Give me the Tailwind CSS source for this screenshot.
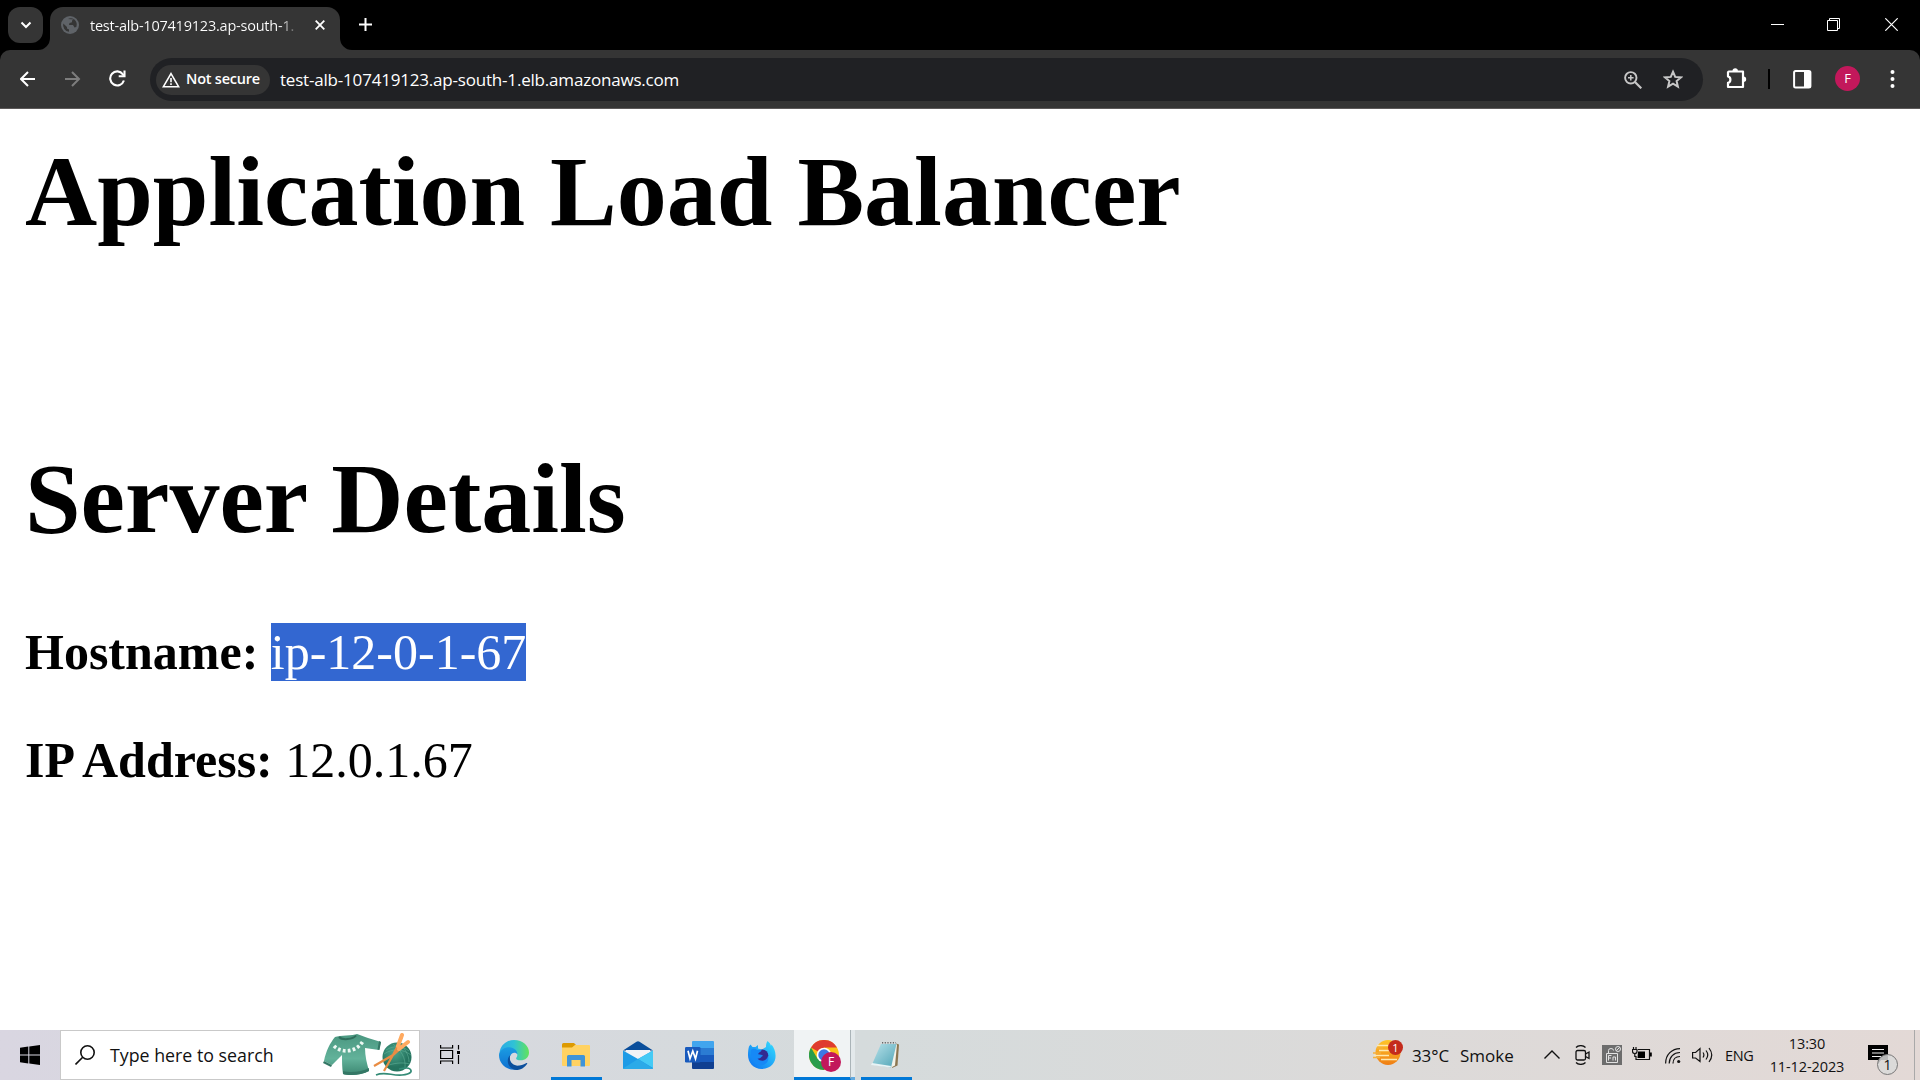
<!DOCTYPE html>
<html lang="en">
<head>
<meta charset="utf-8">
<title>test-alb-107419123.ap-south-1.elb.amazonaws.com</title>
<script src="https://cdn.jsdelivr.net/npm/@tailwindcss/browser@4"></script>
</head>
<body class="w-[1920px] h-[1080px] overflow-hidden flex flex-col bg-white font-['Open_Sans','Noto_Sans',sans-serif]">

<!-- Tab strip -->
<header class="h-[50px] shrink-0 bg-black flex text-white">
  <button class="ml-2 mt-[7px] w-[35px] h-9 rounded-xl bg-[#353535] flex items-center justify-center">
    <svg class="w-3 h-3" viewBox="0 0 12 12" fill="none" stroke="#fff" stroke-width="2"><path d="M1.500 3.500 6 8l4.500-4.500"/></svg>
  </button>
  <div class="mt-[7px] ml-[-5px] flex items-end">
    <svg class="w-3 h-3" viewBox="0 0 12 12"><path d="M12 0v12H0A12 12 0 0 0 12 0Z" fill="#353535"/></svg>
    <div class="w-[290px] h-[43px] rounded-t-[13px] bg-[#353535] flex items-start pt-[9px] pl-[11px]">
      <svg class="w-[18px] h-[18px] shrink-0" viewBox="0 0 18 18"><circle cx="9" cy="9" r="9" fill="#5f6368"/><path d="M2.200 7.500 6 11v1.500l2 1v2.300A7 7 0 0 1 2.200 7.500ZM7 3c1.500-1 4-1.300 6 .2L11 4.500v1.700L8.500 7 8 9h4l1.500 2.500 1.800-.5a7 7 0 0 0-1.800-7.400" fill="#353535"/></svg>
      <div class="ml-[11px] w-[209px] h-[22px] overflow-hidden whitespace-nowrap text-[14.500px] leading-[19px] tracking-[-0.22px] bg-linear-to-r from-white from-91% to-transparent bg-clip-text text-transparent">test-alb-107419123.ap-south-1.</div>
      <svg class="ml-4 mt-1 w-[10px] h-[10px]" viewBox="0 0 10 10" stroke="#fff" stroke-width="1.800"><path d="m.7.7 8.600 8.600M9.300.7.7 9.300"/></svg>
    </div>
    <svg class="w-3 h-3" viewBox="0 0 12 12"><path d="M0 0v12h12A12 12 0 0 1 0 0Z" fill="#353535"/></svg>
  </div>
  <svg class="ml-[7px] mt-[18px] w-[13px] h-[13px]" viewBox="0 0 13 13" stroke="#fff" stroke-width="2"><path d="M6.500 0v13M0 6.500h13"/></svg>
  <div class="ml-auto flex pt-[18px] pr-[22px]">
    <svg class="w-[13px] h-[13px]" viewBox="0 0 13 13" stroke="#fff"><path d="M0 6.500h13"/></svg>
    <svg class="ml-[43px] w-[13px] h-[13px]" viewBox="0 0 13 13" stroke="#fff" fill="none"><path d="M.5 2.500h10v10H.5zM2.500 2.500v-2h10v10h-2"/></svg>
    <svg class="ml-[45px] w-[13px] h-[13px]" viewBox="0 0 13 13" stroke="#fff" stroke-width="1.200"><path d="m.3.3 12.400 12.400M12.700.3.3 12.700"/></svg>
  </div>
</header>

<!-- Toolbar -->
<div class="h-[59px] shrink-0 bg-black">
<nav class="h-[59px] bg-[#353535] rounded-t-[10px] border-b border-[#5c5959] flex items-start text-white">
  <svg class="ml-5 mt-[21px] w-4 h-4" viewBox="0 0 16 16" fill="none" stroke="#fff" stroke-width="2"><path d="M15 8H1.500M8 1 1 8l7 7"/></svg>
  <svg class="ml-[29px] mt-[21px] w-4 h-4" viewBox="0 0 16 16" fill="none" stroke="#7d7d7d" stroke-width="2"><path d="M0 8h14M7 1l7 7-7 7"/></svg>
  <svg class="ml-[28px] mt-5 w-[17px] h-[17px]" viewBox="0 0 17 17" fill="none" stroke="#fff" stroke-width="2.100"><path d="M14.900 10.500a7 7 0 1 1-1-6.200l1.100 1.400"/><path d="M15.500.5v5.700H9.700"/></svg>
  <div class="ml-6 mt-2 w-[1553px] h-[43px] rounded-full bg-[#202124] flex items-center pl-[6px] pr-[20px]">
    <div class="w-[114px] h-[30px] rounded-full bg-[#353535] flex items-center pl-[6px]">
      <svg class="w-[18px] h-[16px]" viewBox="0 0 18 16" fill="none" stroke="#fff" stroke-width="1.600"><path d="M9 1.700 16.600 14.700H1.400Z"/><path d="M9 6v4.200M9 11.300v1.700"/></svg>
      <span class="ml-[6px] text-[14.500px] leading-none font-semibold tracking-[-0.22px] whitespace-nowrap">Not secure</span>
    </div>
    <span class="ml-[10px] text-[17px] leading-none whitespace-nowrap tracking-[-0.195px]">test-alb-107419123.ap-south-1.elb.amazonaws.com</span>
    <svg class="ml-auto w-[18px] h-[18px]" viewBox="0 0 18 18" fill="none" stroke="#c7c7c7" stroke-width="1.900"><circle cx="6.800" cy="6.800" r="5.700"/><path d="m11 11 6.300 6.300" stroke-width="2.200"/><path d="M6.800 4v5.600M4 6.800h5.600" stroke-width="1.500"/></svg>
    <svg class="ml-[21px] mb-px w-5 h-5" viewBox="0 0 20 20" fill="none" stroke="#c7c7c7" stroke-width="2"><path d="m10 2.700 2.200 5.200 5.700.5-4.300 3.700 1.300 5.600-4.900-3-4.900 3 1.300-5.600L2.100 8.400l5.700-.5Z"/></svg>
  </div>
  <svg class="ml-[23px] mt-[18px] w-[21px] h-[21px]" viewBox="0 0 21 21"><path d="M2.800 3.500H17v15.500H2v-4.200c3.200-.6 3.200-5.700 0-6.300V4.300Z" fill="none" stroke="#fff" stroke-width="2.200" stroke-linejoin="round"/><path d="M6.500 3a2.700 2.700 0 0 1 5.400 0ZM17.500 8.500a2.700 2.700 0 0 1 0 5.400Z" fill="#fff"/></svg>
  <div class="ml-[21px] mt-[19px] w-[2px] h-5 bg-black"></div>
  <svg class="ml-[23px] mt-5 w-[19px] h-[19px]" viewBox="0 0 19 19"><rect x="1.100" y="1.100" width="16.300" height="16.300" rx="1.500" fill="none" stroke="#fff" stroke-width="2"/><path d="M11 1h6.500v16.500H11z" fill="#fff"/></svg>
  <div class="ml-[23px] mt-4 w-[25px] h-[25px] rounded-full bg-[#c2185b] flex items-center justify-center text-[13px] leading-none">F</div>
  <svg class="ml-[30px] mt-[19px] w-[5px] h-5" viewBox="0 0 5 20" fill="#fff"><circle cx="2.500" cy="3" r="2"/><circle cx="2.500" cy="10" r="2"/><circle cx="2.500" cy="17" r="2"/></svg>
</nav>
</div>

<!-- Page -->
<main class="h-[921px] shrink-0 px-[25px] pt-[25px] text-black text-[50px] leading-[58px] font-['Liberation_Serif',serif]">
  <h1 class="text-[100px] leading-[115px] font-bold whitespace-nowrap">Application Load Balancer</h1>
  <h1 class="mt-[192px] text-[100px] leading-[115px] font-bold whitespace-nowrap">Server Details</h1>
  <p class="mt-[67px]"><strong>Hostname:</strong> <span class="py-px bg-[#3367d1] text-white">ip-12-0-1-67</span></p>
  <p class="mt-[50px]"><strong>IP Address:</strong> 12.0.1.67</p>
</main>

<!-- Taskbar -->
<footer class="h-[50px] shrink-0 flex items-start text-[#111] bg-linear-to-r from-[#d9d6e1] via-[#d5dbdc] via-45% to-[#e3d9d6]">
  <div class="w-[60px] h-full pt-[15px] pl-5"><svg class="w-5 h-5" viewBox="0 0 20 20"><path d="M0 2.700 8.300 1.500v8H0ZM9.300 1.400 20 0v9.500H9.300ZM0 10.500h8.300v8L0 17.300ZM9.300 10.500H20V20L9.300 18.600Z"/></svg></div>
  <div class="w-[360px] h-[50px] bg-white border border-[#c9c9c9] flex items-start">
    <svg class="ml-[14px] mt-[14px] w-5 h-5" viewBox="0 0 20 20" fill="none" stroke="#111" stroke-width="1.600"><circle cx="12.500" cy="7.500" r="6.700"/><path d="M7.700 12.300.5 19.500"/></svg>
    <span class="ml-[15px] mt-[13px] w-[165px] text-[17.800px] leading-[22px] whitespace-nowrap">Type here to search</span>
    <svg class="ml-12 mt-[2px] w-[90px] h-[45px]" viewBox="0 0 90 45">
      <defs>
        <linearGradient id="knit" x1="0" y1="0" x2="0" y2="1"><stop stop-color="#4a9780"/><stop offset=".6" stop-color="#62b29a"/><stop offset="1" stop-color="#3c8771"/></linearGradient>
        <radialGradient id="yarn" cx=".4" cy=".35"><stop stop-color="#4da58d"/><stop offset="1" stop-color="#25745f"/></radialGradient>
      </defs>
      <path d="M12 4C17 2 30 3 34 1c4 1 7 3 11 4l13 4-2 8-14-2c0 8 2 16 4 23-7 4-19 5-26 3-1-6-1-13-1-19L9 32 1 28C3 18 7 10 12 4Z" fill="url(#knit)"/>
      <path d="m1 28 8 4-1 2-8-4ZM56 8l2 1-1.500 8-2-.5ZM20 38c7 2 19 1 26-3v3c-7 4-19 5-26 3Z" fill="#347765"/>
      <path d="M16 4c3 3.500 14 2.500 17-1.500" stroke="#2f6e5c" stroke-width="2" fill="none"/>
      <path d="M11 13c8 8 23 6 29-5" stroke="#edf8f3" stroke-width="3.600" stroke-dasharray="2.800 2.200" fill="none"/>
      <circle cx="74" cy="24" r="14.500" fill="url(#yarn)"/>
      <path d="M63 17c8-5 17-4 23 1M61 21c9-6 19-5 27 1M63 33c8-3 16-4 24-2M70 11c8 6 13 14 12 24M75 10c7 5 11 12 11 19" stroke="#63b198" stroke-width=".8" fill="none" opacity=".7"/>
      <path d="M53 42c9-4 16 1 26 0s10-4 8-6-6-1-11 0" stroke="#348b76" stroke-width="1.700" fill="none"/>
      <path d="M79 4 70 22 61 38M85 9 70 22 51 33" stroke="#e98c43" stroke-width="2.200" fill="none"/>
      <path d="m79 2-4 11M85 9l-9 7" stroke="#ffaa60" stroke-width="4" stroke-linecap="round"/>
    </svg>
  </div>
  <svg class="ml-5 mt-[15px] w-5 h-[19px]" viewBox="0 0 20 19" fill="none" stroke="#000" stroke-width="1.200"><path d="M.6 0v3h12V0M.6 19v-3h12v3M.6 5.500h12v8H.6zM18.500 0v4.500M18.500 10v9"/><path d="M17 6h3v3h-3z" fill="#000" stroke="none"/></svg>

  <svg class="ml-[39px] mt-[10px] w-[30px] h-[30px]" viewBox="0 0 30 30">
    <defs>
      <linearGradient id="e1" x1="0" x2="1"><stop stop-color="#2aa8e6"/><stop offset=".5" stop-color="#2fc2d6"/><stop offset="1" stop-color="#62e35a"/></linearGradient>
      <linearGradient id="e2" x1="0" y1="0" x2="0" y2="1"><stop stop-color="#1b9de2"/><stop offset="1" stop-color="#0f6fd0"/></linearGradient>
      <linearGradient id="ff" x1="0" y1="1" x2="1" y2="0"><stop stop-color="#0a6cf0"/><stop offset="1" stop-color="#35e0ff"/></linearGradient>
      <linearGradient id="np" x1="0" y1="0" x2="1" y2="1"><stop stop-color="#b9e2ea"/><stop offset="1" stop-color="#4fa4b6"/></linearGradient>
      <linearGradient id="sun" x1="0" y1="0" x2="0" y2="1"><stop stop-color="#ffc629"/><stop offset="1" stop-color="#ef7d14"/></linearGradient>
    </defs>
    <path d="M.8 11C2.500 4 8.500 0 15 0c9 0 15 6 15 12.500 0 5-4 7.800-8.300 7.800-3.500 0-5-1.300-4.500-2.300 2.500-3 1-8-5.200-8C6 10 1 13 0 16Z" fill="url(#e1)"/>
    <path d="M0 15C1 9.500 6 7 10.500 7.200c4.500.2 8 3.500 8 7.300-2-3-6.500-2-7.500 2-1.200 6 3.500 11.500 9 12.500C9.500 32 0 25 0 15Z" fill="url(#e2)"/>
    <path d="M11.300 15c-2.300 7 3.700 11.500 9.200 10.500 3.500-.3 6-2 7-2.500.8-.3 1 .3.700.8C24 30 18.500 30.500 15.500 29.800 8 27 7 19 11.300 15Z" fill="#0c4f9c"/>
  </svg>

  <div class="ml-[22px] w-[51px] h-[50px] pt-[13px] pl-[11px] border-b-[3px] border-[#0078d7]">
    <svg class="w-7 h-6" viewBox="0 0 28 24"><path d="M0 1.500Q0 0 1.500 0H12l2 2-2.500 3H0Z" fill="#dd9a00"/><path d="M0 4.500h10l3-2.500h14q1 0 1 1v19q0 1-1 1H1q-1 0-1-1Z" fill="#ffd262"/><path d="M5 23.500V13.500q0-1.500 1.500-1.500h15q1.500 0 1.500 1.500v10h-4.500V17h-9v6.500Z" fill="#3f94d8"/></svg>
  </div>
  <svg class="ml-[21px] mt-[11px] w-[30px] h-7" viewBox="0 0 30 28"><path d="M0 9.500 13.500.700q1.500-1 3 0L30 9.500Z" fill="#0a4e9b"/><path d="M3 9h24v8L15 25 3 17Z" fill="#f3f3f6"/><path d="M0 9.500 15 18 30 9.500V27q0 1-1 1H1q-1 0-1-1Z" fill="#1e9be6"/><path d="M30 9.500 15 18l15 9Z" fill="#45caf5"/><path d="M15 18 0 27.500q.2.500 1 .5h28l1-.5Z" fill="#2baae8"/></svg>
  <svg class="ml-8 mt-[11px] w-[29px] h-7" viewBox="0 0 29 28"><path d="M7 1q0-1 1-1h20q1 0 1 1v6H7Z" fill="#41a5ee"/><path d="M7 7h22v7H7z" fill="#2b7cd3"/><path d="M7 14h22v7H7z" fill="#185abd"/><path d="M7 21h22v6q0 1-1 1H8q-1 0-1-1Z" fill="#103f91"/><rect y="6" width="15.500" height="15.500" rx="1.300" fill="#185abd"/><path d="m3 9.700 2 8L7.800 10l2.700 7.700 2-8" fill="none" stroke="#fff" stroke-width="1.700"/></svg>
  <svg class="ml-[34px] mt-[11px] w-7 h-7" viewBox="0 0 28 28"><path d="M1 5.500 2.500 3.500l2 2.500h3L10 4v3.500l4 1 4-2.500c0-3 .5-4.500 1.500-6 2 1.500 3 3 3.500 5l.5-1.500C30 11 30 27 14 28 5 28 0 21 0 14c0-3 .3-6 1-8.500Z" fill="url(#ff)"/><circle cx="14.300" cy="14.500" r="6" fill="#332a91"/><path d="M3 9c3-2 5-1 6 0h4.500c0 2-3 2.200-3.300 4.200 2.300.5 3.500 0 4.800 1.500-2 1-2 3-5.500 2.800 2.500 3.500 9.500 3 10.500-2.500 1.500 7-4 10-9 9C6 23 2 17 3 9Z" fill="#1689f6"/></svg>

  <div class="ml-[18px] w-[57px] h-[50px] bg-[#f0f3f4] border-b-[3px] border-[#0078d7] border-r border-r-[#aab4b8] pt-[10px] pl-[15px]">
    <div class="relative w-[33px] h-8">
      <svg class="w-[30px] h-[30px]" viewBox="0 0 30 30"><circle cx="15" cy="15" r="15" fill="#fbc116"/><path d="M15 15 2 7.500A15 15 0 0 1 28 7.500H15Z" fill="#df3b2f"/><path d="M2 7.500A15 15 0 0 0 15 30l6.500-11.200L15 15 8.500 18.700Z" fill="#2a9d4c"/><circle cx="15" cy="15" r="7.300" fill="#fff"/><circle cx="15" cy="15" r="5.700" fill="#3b78e7"/></svg>
      <span class="absolute left-3 top-3 w-5 h-5 rounded-full bg-[#c2185b] text-white text-[12px] leading-5 text-center">F</span>
    </div>
  </div>
  <div class="w-1 h-[50px] bg-[#e3e9eb] border-b-[3px] border-[#5fa9e0]"></div>
  <div class="ml-[6px] w-[51px] h-[50px] pt-[11px] pl-[10px] border-b-[3px] border-[#0078d7]">
    <svg class="w-[29px] h-7" viewBox="0 0 29 28"><path d="m25 2.500 3 1-1.500 21L21 27Z" fill="#8b7650"/><path d="m24 3 2 .5-2 21-4 2Z" fill="#f3f3ea"/><path d="M10 3h15.500L20 26.500 1 23.500Z" fill="url(#np)"/><path d="m1 22 19 3-.5 1.500L0 24Z" fill="#e8f3f5"/><path d="M11 1.800h14" stroke="#666" stroke-width="1.500" stroke-dasharray="1.200 1.500"/></svg>
  </div>

  <div class="ml-auto flex items-start h-full">
    <div class="relative w-[30px] h-[50px] pt-[10px]">
      <svg class="w-7 h-[26px]" viewBox="0 0 28 26"><circle cx="15" cy="12.500" r="12.500" fill="url(#sun)"/><path d="M4 5.500h12M6 10.500h18M1 15.500h15M8 19.500h16" stroke="#ffe9b0" stroke-width="1.500"/><path d="M0 13h8M0 17.500h7M4 8h6" stroke="#f6b03a" stroke-width="1.500"/></svg>
      <span class="absolute left-[15px] top-[10px] w-[15px] h-[15px] rounded-full bg-[#c42b1c] text-white text-[11px] leading-[15px] text-center">1</span>
    </div>
    <span class="ml-[9px] mt-[15px] w-[48px] text-[17px] leading-[22px] tracking-[-0.1px] whitespace-nowrap">33°C</span>
    <span class="mt-[15px] w-[55px] text-[17px] leading-[22px] whitespace-nowrap">Smoke</span>
    <svg class="ml-[29px] mt-5 w-4 h-[9px]" viewBox="0 0 16 9" fill="none" stroke="#111" stroke-width="1.400"><path d="m.5 8.500 7.500-7.500 7.500 7.500"/></svg>
    <svg class="ml-[15px] mt-[15px] w-4 h-5" viewBox="0 0 16 20" fill="none" stroke="#111" stroke-width="1.300"><rect x="1" y="5.500" width="9.500" height="9.500" rx="1.500"/><path d="m10.500 9 3.500-2v6.500l-3.500-2M1 2.500C3.500 0 8 0 10.500 2.500M1 17.500c2.500 2.500 7 2.500 9.500 0"/></svg>
    <svg class="ml-[11px] mt-[15px] w-5 h-5" viewBox="0 0 20 20"><path d="M0 0h20v20H0z" fill="#6d6d6d"/><g fill="none" stroke="#e2e2e2"><path d="M4.500 8.500h11v9h-11zM6.500 8.500V5.500q0-2 2.500-2t2.500 2"/><circle cx="16" cy="4" r="2.500"/><path d="m14.300 5.700 3.400-3.400M6.500 15.500v-5h3M6.500 13h2.500M11 15.500V12h2.500v3.500"/></g></svg>
    <svg class="ml-[10px] mt-[17px] w-5 h-[15px]" viewBox="0 0 20 15"><path d="M6 2.500h11.500v10H4v-3" fill="none" stroke="#111" stroke-width="1.200"/><path d="M6 4.500h7v6.500H5.500ZM18 5.500h1.800v4H18z"/><path d="M1.500 0v2.500M4 0v2.500M.5 2.500H5v2Q5 6.500 2.800 6.500T.5 4.500ZM2.800 6.500v3H4.500" fill="none" stroke="#111" stroke-width="1.200"/></svg>
    <svg class="ml-[13px] mt-[18px] w-4 h-4" viewBox="0 0 16 16" fill="none" stroke="#111" stroke-width="1.200"><path d="M.6 15.500C.6 6.500 7 .6 15 .6M4.200 15.500c0-6.500 4.500-11 10.800-11M8 15.500c0-4 2.500-7 7-7"/><circle cx="13.700" cy="13.500" r="1.600" fill="#111" stroke="none"/></svg>
    <svg class="ml-[11px] mt-[17px] w-[21px] h-4" viewBox="0 0 21 16" fill="none" stroke="#111" stroke-width="1.200"><path d="M.6 5.500h3L8 1.500v13L3.600 11h-3ZM11 5.500q1.800 2.500 0 5M14 3.500q3.500 4.500 0 9M17 1q5.500 7 0 14"/></svg>
    <span class="ml-[12px] mt-[15px] w-[30px] text-[14.500px] leading-[21px] tracking-[-0.3px] whitespace-nowrap">ENG</span>
    <div class="ml-[11px] w-[82px] pt-[2px] text-center text-[14.500px] leading-[23px] tracking-[-0.1px] whitespace-nowrap"><div>13:30</div><div>11-12-2023</div></div>
    <div class="relative ml-[20px] mt-[15px] w-[30px] h-[30px]">
      <svg class="w-5 h-[19px]" viewBox="0 0 20 19"><path d="M0 0h20v15H13l-3 4v-4H0Z"/><path d="M4 4.500h12M4 8h12M4 11.500h9" stroke="#eee" stroke-width="1.200"/></svg>
      <span class="absolute left-[9px] top-[9px] w-[21px] h-[21px] rounded-full border border-[#777] bg-[#d9d9d9]/85 text-[14px] leading-[19px] text-center">1</span>
    </div>
    <div class="ml-[16px] w-[6px] h-full border-l border-[#a9a9a9]"></div>
  </div>
</footer>
</body>
</html>
